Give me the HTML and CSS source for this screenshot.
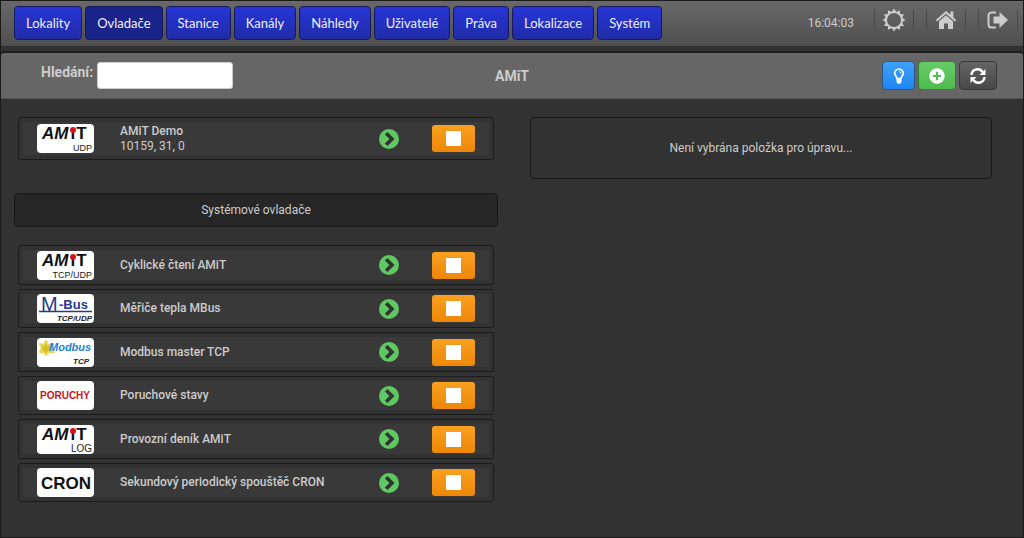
FILE: index.html
```html
<!DOCTYPE html>
<html lang="cs">
<head>
<meta charset="utf-8">
<title>Ovladače</title>
<link rel="stylesheet" href="styles.css">
</head>
<body>
<svg class="defs" aria-hidden="true">
  <symbol id="run" viewBox="0 0 20 20"><circle cx="10" cy="10" r="10" fill="#5fc862"/><path d="M7.200 4.200 13 10l-5.800 5.800" fill="none" stroke="#333" stroke-width="3.600"/></symbol>
</svg>
<header class="topbar">
  <nav class="menu">
    <button class="tab">Lokality</button>
    <button class="tab active">Ovladače</button>
    <button class="tab">Stanice</button>
    <button class="tab">Kanály</button>
    <button class="tab">Náhledy</button>
    <button class="tab">Uživatelé</button>
    <button class="tab">Práva</button>
    <button class="tab">Lokalizace</button>
    <button class="tab">Systém</button>
  </nav>
  <time class="clock">16:04:03</time>
  <div class="tools">
    <button class="tool" aria-label="Nastavení"><svg width="24" height="24" viewBox="0 0 24 24"><circle cx="12" cy="12" r="8" fill="none" stroke="#ccc" stroke-width="2"/><path fill="#ccc" d="M9.800 4 12 .5 14.200 4zM14.500 4.200l3.400-2 .2 4.200zM18 6.200l4 .1-2 3.600zM20 9.800l3.500 2.200-3.500 2.200zM20 14.400l2 3.500-4 .1zM18.200 17.800l-.3 4-3.600-1.800zM14.200 20 12 23.500 9.800 20zM9.700 20l-3.600 1.800-.3-4zM6 18l-4-.1 2-3.500zM4 14.200.5 12 4 9.800zM4 9.900 2 6.300l4-.1zM5.900 6.400l.2-4.200 3.400 2z"/></svg></button>
    <button class="tool" aria-label="Domů"><svg width="22" height="20" viewBox="0 0 22 20"><path fill="#ccc" d="M11 1 .8 10l1.300 1.500L11 3.800l8.900 7.700 1.300-1.500-2.800-2.500V1.500h-3v3.300zM11 5.200l-7 6V19h5v-5.500h4V19h5v-7.800z"/></svg></button>
    <button class="tool" aria-label="Odhlásit"><svg width="22" height="18" viewBox="0 0 22 18"><path d="M9 1.500H4.500a3 3 0 0 0-3 3v9a3 3 0 0 0 3 3H9" fill="none" stroke="#ccc" stroke-width="2"/><path fill="#ccc" d="M6.500 5.500h6V1L21 9l-8.500 8v-4.500h-6z"/></svg></button>
  </div>
</header>
<section class="toolbar">
  <div class="search"><label for="q">Hledání:</label><input id="q" type="text"></div>
  <h1 class="title">AMiT</h1>
  <div class="actions">
    <button class="btn blue" aria-label="Nápověda"><svg width="12" height="16" viewBox="0 0 12 16"><path d="M6 1a4.300 4.300 0 0 0-4.300 4.300c0 2.200 2.300 3 2.300 5.200h4c0-2.200 2.300-3 2.300-5.200A4.300 4.300 0 0 0 6 1z" fill="none" stroke="#fff" stroke-width="1.700"/><path d="M6.200 3.500Q8 3.600 8 5.500" fill="none" stroke="#fff"/><path fill="#fff" d="M3.500 10h5v4l-1.300 1.700H4.800L3.500 14z"/></svg></button>
    <button class="btn green" aria-label="Přidat"><svg width="16" height="16" viewBox="0 0 16 16"><circle cx="8" cy="8" r="7.700" fill="#fff"/><path d="M8 3.800v8.400M3.800 8h8.400" stroke="#5bbd55" stroke-width="2.200"/></svg></button>
    <button class="btn gray" aria-label="Obnovit"><svg width="16" height="16" viewBox="0 0 16 16"><path d="M1.500 7A6 6 0 0 1 12.500 4M14.500 9A6 6 0 0 1 3.500 12" fill="none" stroke="#fff" stroke-width="2.400"/><path fill="#fff" d="M15.500 1v6h-6zM.5 15V9h6z"/></svg></button>
  </div>
</section>
<main class="content">
  <div class="drivers">
    <ul class="list">
      <li class="row tall"><div class="inner">
        <svg class="logo" viewBox="0 0 57 29"><text class="amit" x="5" y="15"><tspan class="slant">AM</tspan><tspan dx="2">ı</tspan><tspan dx="1">T</tspan></text><circle cx="36" cy="6" r="3" fill="#d8111b"/><text class="sub" x="55" y="27">UDP</text></svg>
        <div class="name"><strong>AMiT Demo</strong><span>10159, 31, 0</span></div>
        <svg class="run"><use href="#run"/></svg><button class="stop" aria-label="Zastavit"></button></div></li>
    </ul>
    <h2 class="group">Systémové ovladače</h2>
    <ul class="list">
      <li class="row"><div class="inner">
        <svg class="logo" viewBox="0 0 57 29"><text class="amit" x="5" y="15"><tspan class="slant">AM</tspan><tspan dx="2">ı</tspan><tspan dx="1">T</tspan></text><circle cx="36" cy="6" r="3" fill="#d8111b"/><text class="sub" x="55" y="27">TCP/UDP</text></svg>
        <div class="name"><strong>Cyklické čtení AMiT</strong></div>
        <svg class="run"><use href="#run"/></svg><button class="stop" aria-label="Zastavit"></button></div></li>
      <li class="row"><div class="inner">
        <svg class="logo" viewBox="0 0 57 29"><text class="mbus-m" x="4" y="17">M</text><path d="M2 17.500h53" stroke="#26398e" stroke-width="1.500"/><text class="mbus" x="22" y="15">-Bus</text><text class="sub small slant" x="55" y="27">TCP/UDP</text></svg>
        <div class="name"><strong>Měřiče tepla MBus</strong></div>
        <svg class="run"><use href="#run"/></svg><button class="stop" aria-label="Zastavit"></button></div></li>
      <li class="row"><div class="inner">
        <svg class="logo" viewBox="0 0 57 29"><path fill="#d9bd25" stroke="#ead85a" stroke-linejoin="round" stroke-width="2" d="m9 3 2 4 5-1-2 4 3 4-5 0-3 3-2-3-4 0 2-4-2-4 4 1z"/><text class="modbus" x="12" y="13">Modbus</text><text class="sub small slant" x="52" y="26">TCP</text></svg>
        <div class="name"><strong>Modbus master TCP</strong></div>
        <svg class="run"><use href="#run"/></svg><button class="stop" aria-label="Zastavit"></button></div></li>
      <li class="row"><div class="inner">
        <svg class="logo" viewBox="0 0 57 29"><text class="poruchy" x="28" y="18">PORUCHY</text></svg>
        <div class="name"><strong>Poruchové stavy</strong></div>
        <svg class="run"><use href="#run"/></svg><button class="stop" aria-label="Zastavit"></button></div></li>
      <li class="row"><div class="inner">
        <svg class="logo" viewBox="0 0 57 29"><text class="amit" x="5" y="15"><tspan class="slant">AM</tspan><tspan dx="2">ı</tspan><tspan dx="1">T</tspan></text><circle cx="36" cy="6" r="3" fill="#d8111b"/><text class="sub log" x="55" y="27">LOG</text></svg>
        <div class="name"><strong>Provozní deník AMiT</strong></div>
        <svg class="run"><use href="#run"/></svg><button class="stop" aria-label="Zastavit"></button></div></li>
      <li class="row"><div class="inner">
        <svg class="logo" viewBox="0 0 57 29"><text class="cron" x="29" y="21">CRON</text></svg>
        <div class="name"><strong>Sekundový periodický spouštěč CRON</strong></div>
        <svg class="run"><use href="#run"/></svg><button class="stop" aria-label="Zastavit"></button></div></li>
    </ul>
  </div>
  <aside class="detail">Není vybrána položka pro úpravu...</aside>
</main>
</body>
</html>
```

FILE: styles.css
```css
* { box-sizing: border-box; }
body {
  margin: 0;
  min-height: 100vh;
  background: #323232;
  border: 1px solid #1b1b1b;
  color: #ccc;
  font: 12px/15px Roboto, sans-serif;
}
.defs { display: none; }
button { margin: 0; padding: 0; font: inherit; }
.topbar {
  display: flex;
  align-items: center;
  height: 45px;
  padding: 0 5px 0 13px;
  background: linear-gradient(#686868, #505050);
  border-bottom: 1px solid #484848;
}
.menu { display: flex; gap: 3px; flex: 1; }
.tab {
  height: 34px;
  padding: 0 11px;
  border: 1px solid #15195f;
  border-radius: 4px;
  background: linear-gradient(#2735d8, #202ca6);
  color: #eef;
  font: 13px/20px Lato, sans-serif;
}
.tab.active { background: #1a2389; }
.clock { margin-right: 20px; }
.tools { display: flex; gap: 12px; padding-bottom: 6px; }
.tool {
  display: flex;
  align-items: center;
  justify-content: center;
  width: 40px;
  height: 20px;
  border: solid #484848;
  border-width: 0 1px;
  background: none;
}
.tool svg { flex: none; }
.toolbar {
  display: grid;
  grid-template-columns: 1fr auto 1fr;
  align-items: center;
  height: 48px;
  margin-top: 5px;
  padding: 0 26px;
  background: #666;
  border-top: 2px solid #1c1c1c;
  border-bottom: 1px solid #555;
  border-radius: 4px 4px 0 0;
}
.search {
  display: flex;
  gap: 4px;
  padding-left: 14px;
  font: bold 14px/20px Roboto, sans-serif;
}
.search input {
  width: 136px;
  height: 27px;
  padding: 2px 6px;
  border: 1px solid #ccc;
  border-radius: 3px;
  background: #fff;
}
.title { margin: 0; font: bold 14px/20px Roboto, sans-serif; }
.actions { display: flex; gap: 3px; justify-content: flex-end; }
.btn {
  display: flex;
  align-items: center;
  justify-content: center;
  width: 38px;
  height: 29px;
  border: 1px solid #3c4a3c;
  border-radius: 4px;
}
.blue { width: 33px; background: linear-gradient(#3fa0f8, #1f86f4); border-color: #2b5788; }
.green { background: linear-gradient(#66cc66, #4fba4f); border-color: #397b39; }
.gray { background: linear-gradient(#646464, #484848); border-color: #383838; }
.content {
  display: grid;
  grid-template-columns: 484fr 462fr;
  gap: 32px;
  align-items: start;
  padding: 18px 31px 24px 13px;
}
.list {
  display: flex;
  flex-direction: column;
  gap: 4px;
  margin: 0;
  padding: 0 4px;
  list-style: none;
}
.row {
  height: 40px;
  padding: 4px;
  border: 1px solid #1b1b1b;
  border-radius: 3px;
  background: #323232;
}
.row:nth-child(even) { height: 39px; }
.row.tall { height: 43px; }
.inner {
  display: flex;
  align-items: center;
  height: 100%;
  padding: 0 14px;
  background: #393939;
}
.logo {
  flex: none;
  width: 57px;
  height: 29px;
  margin-right: 26px;
  border-radius: 4px;
  background: #fff;
  font-family: "Liberation Sans", sans-serif;
}
.amit { font-size: 17px; font-weight: bold; fill: #111; }
.slant { font-style: italic; }
.sub { font-size: 9px; text-anchor: end; fill: #222; }
.sub.log { font-size: 10px; }
.sub.small { font-size: 8px; font-weight: bold; }
.mbus-m { font-size: 20px; fill: #26398e; }
.mbus { font-size: 13px; font-weight: bold; fill: #26398e; }
.modbus { font-size: 11px; font-weight: bold; font-style: italic; fill: #2080d8; }
.poruchy { font-size: 10px; font-weight: bold; fill: #c41720; text-anchor: middle; }
.cron { font-size: 17px; font-weight: bold; fill: #111; text-anchor: middle; }
.name { flex: 1; }
.name strong { display: block; font-weight: 500; }
.name span { display: block; }
.run { flex: none; width: 20px; height: 20px; margin-right: 33px; }
.stop {
  display: grid;
  place-items: center;
  width: 43px;
  height: 27px;
  border: 0;
  border-radius: 3px;
  background: linear-gradient(#f9a01f, #ee8708);
}
.stop::before { content: ""; width: 15px; height: 15px; background: #fff; }
.group {
  margin: 33px 0 18px;
  padding: 8px;
  border: 1px solid #171717;
  border-radius: 4px;
  background: #262626;
  font: 12px/16px Roboto, sans-serif;
  text-align: center;
}
.detail {
  padding: 22px;
  border: 1px solid #171717;
  border-radius: 4px;
  line-height: 16px;
  text-align: center;
}
```
